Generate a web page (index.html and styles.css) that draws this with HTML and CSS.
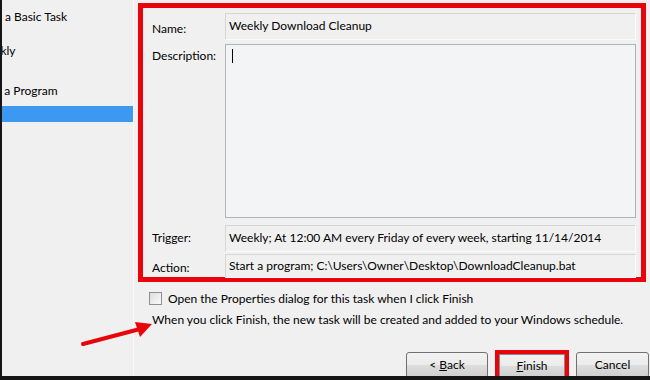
FILE: index.html
```html
<!DOCTYPE html>
<html lang="en">
<head>
    <meta charset="UTF-8">
    <title>Create Basic Task Wizard - Finish</title>
    <link rel="stylesheet" href="styles.css">
</head>
<body>
    <div class="window">
        <ul class="steps">
            <li class="step first">Create a Basic Task</li>
            <li class="step group">Trigger</li>
            <li class="step sub">Weekly</li>
            <li class="step group tall">Action</li>
            <li class="step sub tall">Start a Program</li>
            <li class="step group current">Finish</li>
        </ul>

        <div class="content">
            <div class="summary">
                <div class="row name-row">
                    <span class="label">Name:</span>
                    <div class="field">Weekly Download Cleanup</div>
                </div>
                <div class="row desc-row">
                    <span class="label">Description:</span>
                    <div class="textarea"><span class="caret"></span></div>
                </div>
                <div class="row trigger-row">
                    <span class="label">Trigger:</span>
                    <div class="field">Weekly; At 12:00 AM every Friday of every week, starting 11/14/2014</div>
                </div>
                <div class="row action-row">
                    <span class="label">Action:</span>
                    <div class="field">Start a program; C:\Users\Owner\Desktop\DownloadCleanup.bat</div>
                </div>
            </div>

            <label class="check">
                <span class="box"></span>
                Open the Properties dialog for this task when I click Finish
            </label>
            <p class="note">When you click Finish, the new task will be created and added to your Windows schedule.</p>

            <div class="buttons">
                <button class="btn btn-back">&lt; <u>B</u>ack</button>
                <div class="highlight">
                    <button class="btn btn-finish"><u>F</u>inish</button>
                </div>
                <button class="btn btn-cancel">Cancel</button>
            </div>
        </div>
    </div>

    <!-- red annotation arrow pointing at the note -->
    <svg class="arrow" width="90" height="40" viewBox="0 0 90 40">
        <line x1="3" y1="32" x2="60" y2="17" stroke="#e8040a" stroke-width="4" stroke-linecap="round"/>
        <polygon points="72,12 55,10 60,25" fill="#e8040a"/>
    </svg>
</body>
</html>
```

FILE: styles.css
```css
html {
    background-color: #f0f0f0;
    overflow: hidden;
}

body {
    margin: 0;
    width: 100%;
    height: 380px;
    box-sizing: border-box;
    border-left: 2px solid #151515;
    border-bottom: 4px solid #151515;
    background-color: #f0f0f0;
    font-family: 'Lato', 'Liberation Sans', sans-serif;
    font-size: 12px;
    color: #000;
    overflow: hidden;
    position: relative;
}

.window {
    display: flex;
    height: 100%;
}

.steps {
    list-style: none;
    margin: 0;
    padding: 8px 0 0 0;
    width: 131px;
    border-right: 1px solid #fafafa;
    overflow: hidden;
    flex-shrink: 0;
}

.step {
    height: 17px;
    line-height: 17px;
    white-space: nowrap;
}

.step.first {
    text-indent: -35px;
}

.step.group {
    text-indent: -45px;
}

.step.sub {
    text-indent: -26px;
}

.step.tall {
    height: 21px;
    line-height: 22px;
}

.step.current {
    margin-top: 5px;
    height: 16px;
    background-color: #3c98f1;
    color: #fff;
}

.content {
    flex: 1;
    padding: 3px 4px 0 4px;
    display: flex;
    flex-direction: column;
}

.summary {
    border: 5px solid #e8040a;
    height: 279px;
    box-sizing: border-box;
    padding: 5px 5px 0 9px;
    display: flex;
    flex-direction: column;
}

.row {
    display: grid;
    grid-template-columns: 73px 1fr;
}

.label {
    line-height: 16px;
    padding-top: 4px;
}

.name-row .label {
    padding-top: 8px;
}

.field {
    height: 27px;
    box-sizing: border-box;
    border: 1px solid #d6d6d6;
    border-bottom-color: #fbfbfb;
    border-right-color: #fbfbfb;
    padding: 4px 3px 0 3px;
    line-height: 16px;
    white-space: nowrap;
    overflow: hidden;
}

.desc-row {
    margin-top: 4px;
}

.textarea {
    height: 174px;
    box-sizing: border-box;
    border: 1px solid #abb4be;
    background-color: #f3f4f5;
    padding: 4px 6px;
}

.caret {
    display: block;
    width: 1px;
    height: 14px;
    background-color: #000;
}

.trigger-row {
    margin-top: 7px;
}

.trigger-row .label {
    padding-top: 5px;
}

.action-row {
    margin-top: 2px;
}

.action-row .field {
    height: 24px;
    padding-top: 3px;
}

.action-row .label {
    padding-top: 6px;
}

.check {
    display: flex;
    align-items: center;
    gap: 6px;
    margin: 10px 0 0 11px;
    height: 13px;
}

.box {
    width: 11px;
    height: 11px;
    border: 1px solid #8f8f8f;
    background: linear-gradient(135deg, #dcdcdc, #fbfbfb);
}

.note {
    margin: 7px 0 0 14px;
    line-height: 16px;
}

.buttons {
    display: flex;
    justify-content: flex-end;
    align-items: flex-start;
    gap: 7px;
    margin: 22px -3px 0 0;
}

.btn {
    font-family: inherit;
    font-size: 12px;
    height: 26px;
    border: 1px solid #707070;
    border-radius: 3px;
    background: linear-gradient(#f2f2f2 0%, #ebebeb 50%, #dddddd 51%, #cfcfcf 100%);
    color: #000;
    padding: 0 0 2px 0;
    margin-top: 2px;
}

.btn-back {
    width: 82px;
}

.btn-cancel {
    width: 73px;
}

.highlight {
    border: 4px solid #e8040a;
    display: flex;
}

.btn-finish {
    width: 66px;
    height: 24px;
    margin: 0;
    border-radius: 0;
    border-color: #8a8a8a;
}

.arrow {
    position: absolute;
    left: 78px;
    top: 312px;
}
```
